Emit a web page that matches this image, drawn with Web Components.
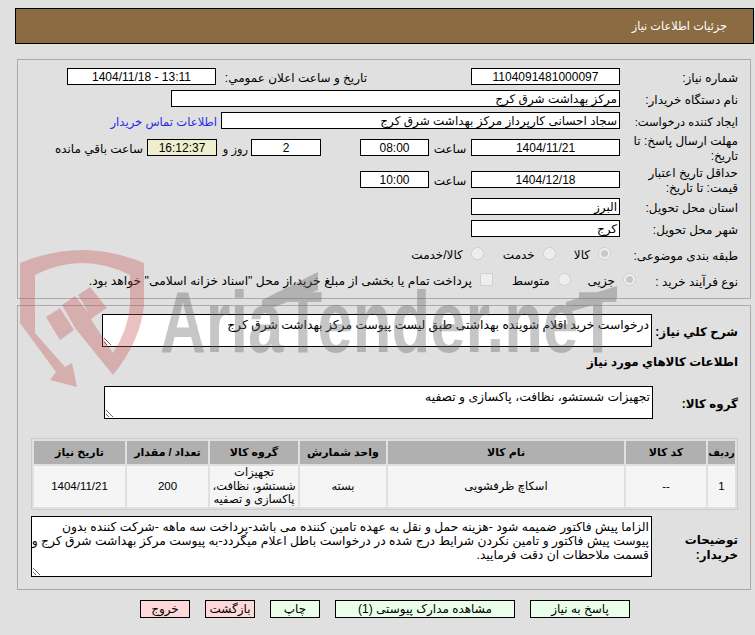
<!DOCTYPE html>
<html lang="fa">
<head>
<meta charset="utf-8">
<title>جزئیات اطلاعات نیاز</title>
<style>
  html, body { margin: 0; height: 100%; background: #e0e0e0; }
  body { font: 12px "Liberation Sans", "DejaVu Sans", sans-serif; color: #000; overflow: hidden; }
</style>
</head>
<body>
<need-page></need-page>

<template id="need-page-tpl">
  <style>
    :host { display: block; position: relative; width: 755px; height: 635px; overflow: hidden; direction: rtl; }
    .head { height: 34px; margin: 8px 1px 0 15px; border: 1px solid #000; background: #8b6c42; color: #fff; display: flex; align-items: center; padding-right: 26px; font-size: 11.3px; }
    .panel { border: 1px solid #aaa; margin: 0 4px 0 17px; }
    .one { margin-top: 15px; height: 240px; box-sizing: border-box; padding: 8px 12px 0 0; }
    .two { margin-top: 6px; height: 285px; box-sizing: border-box; padding: 8px 12px 0 0; }
    .row { display: flex; align-items: center; }
    .lbl { width: 110px; margin-left: 8px; flex: none; line-height: 15px; padding-top: 3px; }
    .one .row { height: 17px; margin-bottom: 5px; }
    .one .r4 { margin: 10px 0 15px; }
    .one .r5 { margin-bottom: 10px; }
    .one .opts { height: 26px; margin: 0; }
    a { color: #2a2aea; text-decoration: none; }
    b.lbl { width: 78px; white-space: nowrap; font-size: 11.9px; }
    .desc { height: 33px; margin-bottom: 7px; }
    .sub { font-weight: bold; font-size: 11.9px; height: 16px; margin-bottom: 16px; }
    .group { height: 33px; margin-bottom: 19px; }
    .notes { height: 61px; margin-top: 6px; }
    .buttons { display: flex; gap: 15px; margin: 10px 125px 0 0; }
    .mark { position: absolute; left: 0; top: 0; pointer-events: none; }
    .mark text { font: bold 87px "Liberation Sans", sans-serif; }
  </style>
  <header class="head">جزئیات اطلاعات نیاز</header>

  <section class="panel one">
    <div class="row r1">
      <span class="lbl">شماره نیاز:</span>
      <field-box w="149" center>1104091481000097</field-box>
      <span style="width:146px;margin-right:104px;padding-top:3px">تاریخ و ساعت اعلان عمومي:</span>
      <field-box w="149" center style="margin-right:5px">13:11 - 1404/11/18</field-box>
    </div>
    <div class="row">
      <span class="lbl">نام دستگاه خریدار:</span>
      <field-box w="449">مرکز بهداشت شرق کرج</field-box>
    </div>
    <div class="row">
      <span class="lbl" style="white-space:nowrap;font-size:11.4px">ایجاد کننده درخواست:</span>
      <field-box w="399">سجاد احسانی کارپرداز مرکز بهداشت شرق کرج</field-box>
      <a href="#" style="margin-right:4px;padding-top:2px;font-size:11.6px">اطلاعات تماس خریدار</a>
    </div>
    <div class="row r4">
      <span class="lbl">مهلت ارسال پاسخ: تا تاریخ:</span>
      <field-box w="149" center>1404/11/21</field-box>
      <span style="width:42px;text-align:center;padding-top:2px">ساعت</span>
      <field-box w="69" center>08:00</field-box>
      <field-box w="70" center style="margin-right:39px">2</field-box>
      <span style="width:31px;padding-right:3px;padding-top:2px;font-size:11.4px;white-space:nowrap">روز و</span>
      <field-box w="70" center tint>16:12:37</field-box>
      <span style="margin-right:4px;padding-top:2px">ساعت باقي مانده</span>
    </div>
    <div class="row r5">
      <span class="lbl">حداقل تاریخ اعتبار قیمت: تا تاریخ:</span>
      <field-box w="149" center>1404/12/18</field-box>
      <span style="width:42px;text-align:center;padding-top:2px">ساعت</span>
      <field-box w="69" center>10:00</field-box>
    </div>
    <div class="row">
      <span class="lbl">استان محل تحویل:</span>
      <field-box w="149">البرز</field-box>
    </div>
    <div class="row">
      <span class="lbl">شهر محل تحویل:</span>
      <field-box w="149">کرج</field-box>
    </div>
    <div class="row opts">
      <span class="lbl">طبقه بندی موضوعی:</span>
      <choice-mark on style="margin-right:9px">کالا</choice-mark>
      <choice-mark style="margin-right:18px">خدمت</choice-mark>
      <choice-mark style="margin-right:19px">کالا/خدمت</choice-mark>
    </div>
    <div class="row opts">
      <span class="lbl">نوع فرآیند خرید :</span>
      <choice-mark on style="margin-right:-16px">جزیی</choice-mark>
      <choice-mark style="margin-right:17px">متوسط</choice-mark>
      <choice-mark square style="margin-right:19px;font-size:12.3px">پرداخت تمام یا بخشی از مبلغ خرید،از محل "اسناد خزانه اسلامی" خواهد بود.</choice-mark>
    </div>
  </section>

  <section class="panel two">
    <div class="row desc">
      <b class="lbl">شرح کلي نیاز:</b>
      <text-area w="550" h="33">درخواست خرید اقلام شوینده بهداشتی طبق لیست پیوست مرکز بهداشت شرق کرج</text-area>
    </div>
    <div class="row sub">اطلاعات کالاهاي مورد نیاز</div>
    <div class="row group">
      <b class="lbl" style="margin-left:7px">گروه کالا:</b>
      <text-area w="549" h="33">تجهیزات شستشو، نظافت، پاکسازی و تصفیه</text-area>
    </div>
    <item-table></item-table>
    <div class="row notes">
      <b class="lbl" style="white-space:normal">توضیحات خریدار:</b>
      <text-area w="621" h="61">الزاما پیش فاکتور ضمیمه شود -هزینه حمل و نقل به عهده تامین کننده می باشد-پرداخت سه ماهه -شرکت کننده بدون<br>پیوست پیش فاکتور و تامین نکردن شرایط درج شده در درخواست باطل اعلام میگردد-به پیوست مرکز بهداشت شرق کرج و<br>قسمت ملاحظات ان دقت فرمایید.</text-area>
    </div>
  </section>

  <nav class="buttons">
    <push-button w="100">پاسخ به نیاز</push-button>
    <push-button w="180">مشاهده مدارک پیوستی (1)</push-button>
    <push-button w="50">چاپ</push-button>
    <push-button w="50" red>بازگشت</push-button>
    <push-button w="50" red>خروج</push-button>
  </nav>

  <svg class="mark" width="755" height="635" viewBox="0 0 755 635" direction="ltr">
    <g fill="#c55050" opacity=".34">
      <path d="M20 263 Q82 237 144 263 L144 305 Q141 340 113 375 L75 328 L90 318 L113 353 Q128 330 130 305 L130 275 Q82 251 35 275 L35 333 L65 367 L72 363 L77 387 L50 380 L56 372 L20 323 Z"/>
      <path d="M46 317 L60 308 L74 330 L60 340 Z M62 305 L75 296 L93 318 L75 328 Z M78 295 L90 287 L107 308 L92 318 Z"/>
    </g>
    <g fill="#646464" opacity=".36">
      <text x="160" y="352" textLength="457" lengthAdjust="spacingAndGlyphs">AriaTender.neT</text>
      <path d="M262 300 L318 272 L318 290 L262 312 Z M566 302 L617 286 L617 298 L566 313 Z"/>
    </g>
  </svg>
</template>

<script>
function tpl(id) { return document.getElementById(id).content.cloneNode(true); }

class NeedPage extends HTMLElement {
  connectedCallback() {
    this.attachShadow({ mode: "open" }).append(tpl("need-page-tpl"));
  }
}

class FieldBox extends HTMLElement {
  connectedCallback() {
    const w = this.getAttribute("w");
    this.attachShadow({ mode: "open" }).innerHTML = `
      <style>
        :host { display: block; flex: none; box-sizing: border-box; height: 17px; width: ${w}px; border: 1px solid #000; background: #fff; line-height: 16px; padding: 0 2px; white-space: nowrap; overflow: hidden; }
        :host([center]) { text-align: center; }
        :host([tint]) { background: #efefd0; }
      </style><slot></slot>`;
  }
}

class TextArea extends HTMLElement {
  connectedCallback() {
    const w = this.getAttribute("w"), h = this.getAttribute("h");
    this.attachShadow({ mode: "open" }).innerHTML = `
      <style>
        :host { display: block; flex: none; box-sizing: border-box; width: ${w}px; height: ${h}px; border: 1px solid #000; background: #fff; padding: 3px 2px 2px; line-height: 14px; font-size: 12.3px; white-space: nowrap; overflow: hidden; resize: both; }
      </style><slot></slot>`;
  }
}

class ChoiceMark extends HTMLElement {
  connectedCallback() {
    this.attachShadow({ mode: "open" }).innerHTML = `
      <style>
        :host { display: inline-flex; align-items: center; gap: 8px; }
        i { width: 11px; height: 11px; flex: none; border: 1px solid #cfcfcf; border-radius: 50%; background: #eee; display: grid; place-items: center; margin-bottom: 3px; }
        :host([square]) i { border-radius: 1px; }
        :host([on]) i::after { content: ""; width: 7px; height: 7px; border-radius: 50%; background: #c8c8c8; }
      </style><i></i><span><slot></slot></span>`;
  }
}

class PushButton extends HTMLElement {
  connectedCallback() {
    const w = this.getAttribute("w");
    this.attachShadow({ mode: "open" }).innerHTML = `
      <style>
        :host { display: block; box-sizing: border-box; width: ${w}px; height: 18px; border: 1px solid #000; background: #e9ffe9; text-align: center; line-height: 17px; white-space: nowrap; overflow: hidden; }
        :host([red]) { background: #ffd9d9; }
      </style><slot></slot>`;
  }
}

class ItemTable extends HTMLElement {
  connectedCallback() {
    const head = ["ردیف", "کد کالا", "نام کالا", "واحد شمارش", "گروه کالا", "تعداد / مقدار", "تاریخ نیاز"];
    const cells = ["1", "--", "اسکاچ ظرفشویی", "بسته", "تجهیزات<br>شستشو، نظافت،<br>پاکسازی و تصفیه", "200", "1404/11/21"];
    this.attachShadow({ mode: "open" }).innerHTML = `
      <style>
        :host { display: block; box-sizing: border-box; width: 707px; height: 72px; border: 1px solid #ccc; padding: 2px; }
        .grid { display: grid; grid-template-columns: 27px 80px 236px 86px 88px 81px 91px; grid-template-rows: 23px 41px; gap: 2px; }
        .h, .c { display: flex; align-items: center; justify-content: center; text-align: center; white-space: nowrap; }
        .h { background: #b0b0b0; font-weight: bold; font-size: 11px; }
        .h:first-child { font-size: 10px; }
        .c { background: #f5f5f5; line-height: 13.5px; font-size: 11.5px; }
      </style>
      <div class="grid">
        ${head.map(t => `<div class="h">${t}</div>`).join("")}
        ${cells.map(t => `<div class="c">${t}</div>`).join("")}
      </div>`;
  }
}

customElements.define("field-box", FieldBox);
customElements.define("text-area", TextArea);
customElements.define("choice-mark", ChoiceMark);
customElements.define("push-button", PushButton);
customElements.define("item-table", ItemTable);
customElements.define("need-page", NeedPage);
</script>
</body>
</html>
